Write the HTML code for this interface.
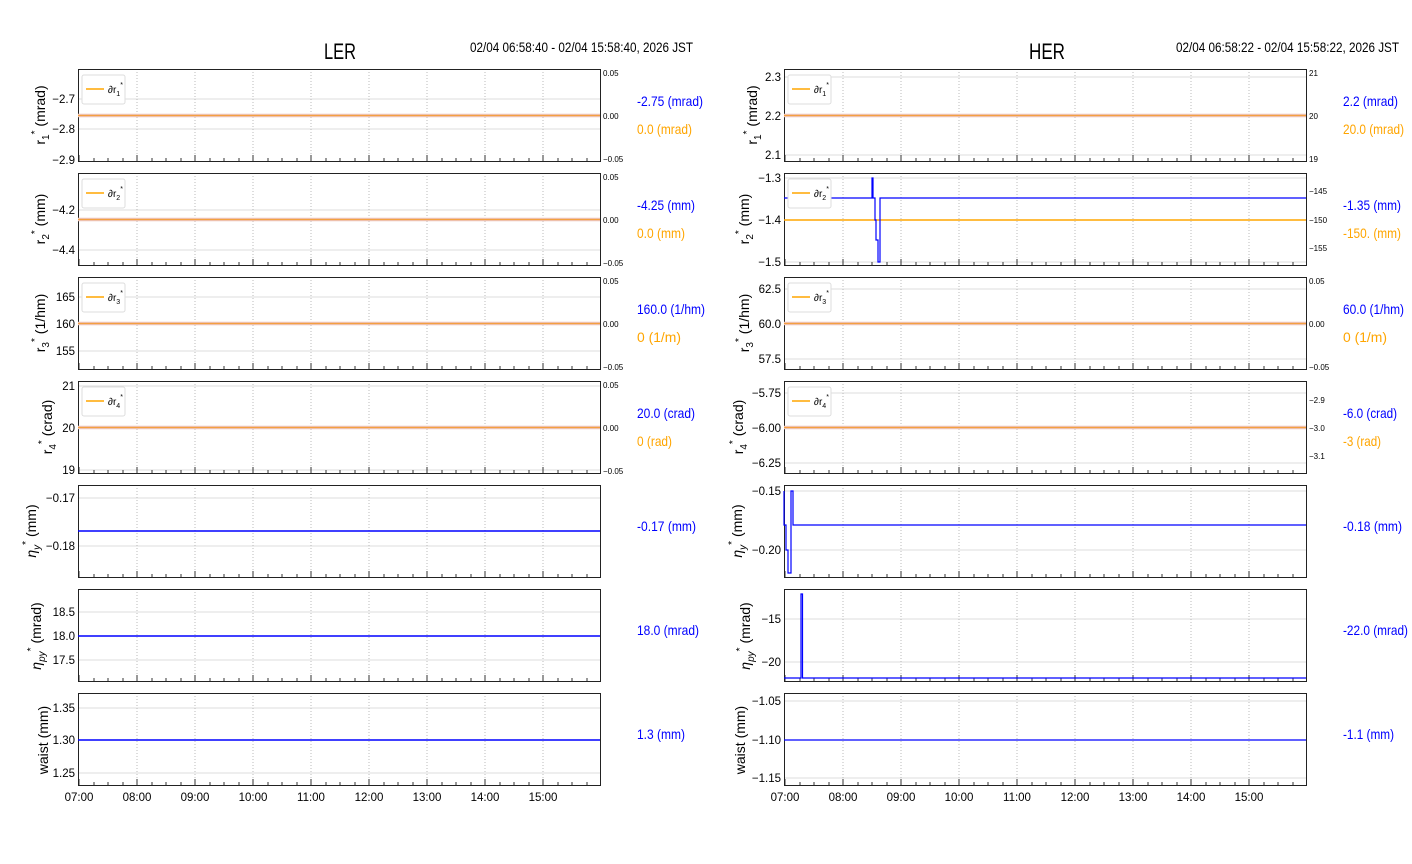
<!DOCTYPE html>
<html><head><meta charset="utf-8"><style>
html,body{margin:0;padding:0;background:#fff}
svg{display:block}
text{font-family:"Liberation Sans Narrow","Liberation Sans","DejaVu Sans Condensed",sans-serif;fill:#000}
.t{font-size:11.5px}
.s{font-size:8px}
.lg{font-size:10px}
.yl{font-family:"DejaVu Sans","Liberation Sans",sans-serif;font-size:14px}
.b{fill:#0000ff;font-size:14px}
.o{fill:#ffa500;font-size:14px}
</style></head><body>
<svg width="1412" height="864" viewBox="0 0 1412 864" xmlns="http://www.w3.org/2000/svg">
<defs>
<g id="vg" stroke="#bbb" stroke-dasharray="1,2" stroke-width="1">
<line x1="59" y1="0" x2="59" y2="92"/><line x1="117" y1="0" x2="117" y2="92"/><line x1="175" y1="0" x2="175" y2="92"/><line x1="233" y1="0" x2="233" y2="92"/><line x1="291" y1="0" x2="291" y2="92"/><line x1="349" y1="0" x2="349" y2="92"/><line x1="407" y1="0" x2="407" y2="92"/><line x1="465" y1="0" x2="465" y2="92"/>
</g>
<g id="tk" stroke="#333" stroke-width="1">
<path d="M1 92v-6M59 92v-6M117 92v-6M175 92v-6M233 92v-6M291 92v-6M349 92v-6M407 92v-6M465 92v-6M16 92v-3M30 92v-3M45 92v-3M74 92v-3M88 92v-3M103 92v-3M132 92v-3M146 92v-3M161 92v-3M190 92v-3M204 92v-3M219 92v-3M248 92v-3M262 92v-3M277 92v-3M306 92v-3M320 92v-3M335 92v-3M364 92v-3M378 92v-3M393 92v-3M422 92v-3M436 92v-3M451 92v-3M480 92v-3M494 92v-3M509 92v-3"/>
</g>
<g id="box">
<use href="#vg"/><use href="#tk"/>
<rect x="0.5" y="0.5" width="522" height="92" fill="none" stroke="#222" stroke-width="1"/>
</g>
<g id="leg">
<rect x="4" y="6" width="43" height="29" rx="2" fill="#fff" stroke="#ddd"/>
<line x1="8" y1="20" x2="26" y2="20" stroke="#ffa500" stroke-width="1.5"/>
</g>
</defs>

<text x="340" y="59" text-anchor="middle" style="font-size:22px" textLength="32" lengthAdjust="spacingAndGlyphs">LER</text>
<text x="470" y="52" style="font-size:13.5px" textLength="223" lengthAdjust="spacingAndGlyphs">02/04 06:58:40 - 02/04 15:58:40, 2026 JST</text>
<text x="1047" y="59" text-anchor="middle" style="font-size:22px" textLength="36" lengthAdjust="spacingAndGlyphs">HER</text>
<text x="1176" y="52" style="font-size:13.5px" textLength="223" lengthAdjust="spacingAndGlyphs">02/04 06:58:22 - 02/04 15:58:22, 2026 JST</text>

<!-- ===== LEFT ===== -->
<g stroke="#ddd" stroke-width="1">
<line x1="78" y1="99" x2="600" y2="99"/><line x1="78" y1="129" x2="600" y2="129"/>
<line x1="78" y1="210" x2="600" y2="210"/><line x1="78" y1="250" x2="600" y2="250"/>
<line x1="78" y1="297" x2="600" y2="297"/><line x1="78" y1="351" x2="600" y2="351"/>
<line x1="78" y1="386" x2="600" y2="386"/><line x1="78" y1="470" x2="600" y2="470"/>
<line x1="78" y1="498" x2="600" y2="498"/><line x1="78" y1="546" x2="600" y2="546"/>
<line x1="78" y1="612" x2="600" y2="612"/><line x1="78" y1="660" x2="600" y2="660"/>
<line x1="78" y1="708" x2="600" y2="708"/><line x1="78" y1="773" x2="600" y2="773"/>
</g>
<use href="#box" x="78" y="69"/><use href="#box" x="78" y="173"/><use href="#box" x="78" y="277"/><use href="#box" x="78" y="381"/><use href="#box" x="78" y="485"/><use href="#box" x="78" y="589"/><use href="#box" x="78" y="693"/>
<g stroke-width="3.5" stroke="#eec4bc">
<line x1="78" y1="115.5" x2="600" y2="115.5"/><line x1="78" y1="219.5" x2="600" y2="219.5"/><line x1="78" y1="323.5" x2="600" y2="323.5"/><line x1="78" y1="427.5" x2="600" y2="427.5"/>
</g>
<g stroke-width="1.2" stroke="#f4a040">
<line x1="78" y1="115.5" x2="600" y2="115.5"/><line x1="78" y1="219.5" x2="600" y2="219.5"/><line x1="78" y1="323.5" x2="600" y2="323.5"/><line x1="78" y1="427.5" x2="600" y2="427.5"/>
</g>
<g stroke="#0000ff" stroke-width="1.5">
<line x1="78" y1="531" x2="600" y2="531"/><line x1="78" y1="636" x2="600" y2="636"/><line x1="78" y1="740" x2="600" y2="740"/>
</g>
<use href="#leg" x="78" y="69"/><use href="#leg" x="78" y="173"/><use href="#leg" x="78" y="277"/><use href="#leg" x="78" y="381"/>
<text class="lg" x="108" y="93">∂r<tspan dy="3" font-size="7">1</tspan><tspan dy="-9" font-size="7">*</tspan></text>
<text class="lg" x="108" y="197">∂r<tspan dy="3" font-size="7">2</tspan><tspan dy="-9" font-size="7">*</tspan></text>
<text class="lg" x="108" y="301">∂r<tspan dy="3" font-size="7">3</tspan><tspan dy="-9" font-size="7">*</tspan></text>
<text class="lg" x="108" y="405">∂r<tspan dy="3" font-size="7">4</tspan><tspan dy="-9" font-size="7">*</tspan></text>
<g class="t" text-anchor="end">
<text x="75" y="103">−2.7</text><text x="75" y="133">−2.8</text><text x="75" y="164">−2.9</text>
<text x="75" y="214">−4.2</text><text x="75" y="254">−4.4</text>
<text x="75" y="301">165</text><text x="75" y="328">160</text><text x="75" y="355">155</text>
<text x="75" y="390">21</text><text x="75" y="432">20</text><text x="75" y="474">19</text>
<text x="75" y="502">−0.17</text><text x="75" y="550">−0.18</text>
<text x="75" y="616">18.5</text><text x="75" y="640">18.0</text><text x="75" y="664">17.5</text>
<text x="75" y="712">1.35</text><text x="75" y="744">1.30</text><text x="75" y="777">1.25</text>
</g>
<g class="s">
<text x="603" y="76">0.05</text><text x="603" y="119">0.00</text><text x="603" y="162">−0.05</text>
<text x="603" y="180">0.05</text><text x="603" y="223">0.00</text><text x="603" y="266">−0.05</text>
<text x="603" y="284">0.05</text><text x="603" y="327">0.00</text><text x="603" y="370">−0.05</text>
<text x="603" y="388">0.05</text><text x="603" y="431">0.00</text><text x="603" y="474">−0.05</text>
</g>
<g class="t" text-anchor="middle">
<text x="79" y="801">07:00</text><text x="137" y="801">08:00</text><text x="195" y="801">09:00</text><text x="253" y="801">10:00</text><text x="311" y="801">11:00</text><text x="369" y="801">12:00</text><text x="427" y="801">13:00</text><text x="485" y="801">14:00</text><text x="543" y="801">15:00</text>
</g>
<g class="yl" text-anchor="middle">
<text transform="translate(45,115) rotate(-90)">r<tspan dy="4" font-size="10">1</tspan><tspan dy="-11" font-size="10">*</tspan><tspan dy="7"> (mrad)</tspan></text>
<text transform="translate(45,219) rotate(-90)">r<tspan dy="4" font-size="10">2</tspan><tspan dy="-11" font-size="10">*</tspan><tspan dy="7"> (mm)</tspan></text>
<text transform="translate(45,323) rotate(-90)">r<tspan dy="4" font-size="10">3</tspan><tspan dy="-11" font-size="10">*</tspan><tspan dy="7"> (1/hm)</tspan></text>
<text transform="translate(52,427) rotate(-90)">r<tspan dy="4" font-size="10">4</tspan><tspan dy="-11" font-size="10">*</tspan><tspan dy="7"> (crad)</tspan></text>
<text transform="translate(36,531) rotate(-90)"><tspan font-style="italic">η</tspan><tspan dy="4" font-size="10" font-style="italic">y</tspan><tspan dy="-11" font-size="10">*</tspan><tspan dy="7"> (mm)</tspan></text>
<text transform="translate(41,636) rotate(-90)"><tspan font-style="italic">η</tspan><tspan dy="4" font-size="10" font-style="italic">py</tspan><tspan dy="-11" font-size="10">*</tspan><tspan dy="7"> (mrad)</tspan></text>
<text transform="translate(48,740) rotate(-90)">waist (mm)</text>
</g>
<g lengthAdjust="spacingAndGlyphs">
<text class="b" x="637" y="106" textLength="66" lengthAdjust="spacingAndGlyphs">-2.75 (mrad)</text><text class="o" x="637" y="134" textLength="55" lengthAdjust="spacingAndGlyphs">0.0 (mrad)</text>
<text class="b" x="637" y="210" textLength="58" lengthAdjust="spacingAndGlyphs">-4.25 (mm)</text><text class="o" x="637" y="238" textLength="48" lengthAdjust="spacingAndGlyphs">0.0 (mm)</text>
<text class="b" x="637" y="314" textLength="68" lengthAdjust="spacingAndGlyphs">160.0 (1/hm)</text><text class="o" x="637" y="342" textLength="44" lengthAdjust="spacingAndGlyphs">0 (1/m)</text>
<text class="b" x="637" y="418" textLength="58" lengthAdjust="spacingAndGlyphs">20.0 (crad)</text><text class="o" x="637" y="446" textLength="35" lengthAdjust="spacingAndGlyphs">0 (rad)</text>
<text class="b" x="637" y="531" textLength="59" lengthAdjust="spacingAndGlyphs">-0.17 (mm)</text>
<text class="b" x="637" y="635" textLength="62" lengthAdjust="spacingAndGlyphs">18.0 (mrad)</text>
<text class="b" x="637" y="739" textLength="48" lengthAdjust="spacingAndGlyphs">1.3 (mm)</text>
</g>

<!-- ===== RIGHT ===== -->
<g stroke="#ddd" stroke-width="1">
<line x1="784" y1="77" x2="1306" y2="77"/><line x1="784" y1="155" x2="1306" y2="155"/>
<line x1="784" y1="178" x2="1306" y2="178"/><line x1="784" y1="262" x2="1306" y2="262"/>
<line x1="784" y1="289" x2="1306" y2="289"/><line x1="784" y1="359" x2="1306" y2="359"/>
<line x1="784" y1="393" x2="1306" y2="393"/><line x1="784" y1="463" x2="1306" y2="463"/>
<line x1="784" y1="491" x2="1306" y2="491"/><line x1="784" y1="550" x2="1306" y2="550"/>
<line x1="784" y1="619" x2="1306" y2="619"/><line x1="784" y1="662" x2="1306" y2="662"/>
<line x1="784" y1="701" x2="1306" y2="701"/><line x1="784" y1="778" x2="1306" y2="778"/>
</g>
<use href="#box" x="784" y="69"/><use href="#box" x="784" y="173"/><use href="#box" x="784" y="277"/><use href="#box" x="784" y="381"/><use href="#box" x="784" y="485"/><use href="#box" x="784" y="589"/><use href="#box" x="784" y="693"/>
<g stroke-width="3.5" stroke="#eec4bc">
<line x1="784" y1="115.5" x2="1306" y2="115.5"/><line x1="784" y1="323.5" x2="1306" y2="323.5"/><line x1="784" y1="427.5" x2="1306" y2="427.5"/>
</g>
<g stroke-width="1.2" stroke="#f4a040">
<line x1="784" y1="115.5" x2="1306" y2="115.5"/><line x1="784" y1="323.5" x2="1306" y2="323.5"/><line x1="784" y1="427.5" x2="1306" y2="427.5"/>
<line x1="784" y1="220" x2="1306" y2="220" stroke="#ffa500" stroke-width="1.5"/>
</g>
<g stroke="#0000ff" stroke-width="1.2" fill="none">
<path d="M784 198H872V178H873V198H875V220H876V240H878V262H880V198H1306"/>
<path d="M784 491V525H786V550H788V573H791V491H793V525H1306"/>
<path d="M784 678H801V594H802.5V678H1306"/>
<line x1="784" y1="740" x2="1306" y2="740"/>
</g>
<use href="#leg" x="784" y="69"/><use href="#leg" x="784" y="173"/><use href="#leg" x="784" y="277"/><use href="#leg" x="784" y="381"/>
<text class="lg" x="814" y="93">∂r<tspan dy="3" font-size="7">1</tspan><tspan dy="-9" font-size="7">*</tspan></text>
<text class="lg" x="814" y="197">∂r<tspan dy="3" font-size="7">2</tspan><tspan dy="-9" font-size="7">*</tspan></text>
<text class="lg" x="814" y="301">∂r<tspan dy="3" font-size="7">3</tspan><tspan dy="-9" font-size="7">*</tspan></text>
<text class="lg" x="814" y="405">∂r<tspan dy="3" font-size="7">4</tspan><tspan dy="-9" font-size="7">*</tspan></text>
<g class="t" text-anchor="end">
<text x="781" y="81">2.3</text><text x="781" y="120">2.2</text><text x="781" y="159">2.1</text>
<text x="781" y="182">−1.3</text><text x="781" y="224">−1.4</text><text x="781" y="266">−1.5</text>
<text x="781" y="293">62.5</text><text x="781" y="328">60.0</text><text x="781" y="363">57.5</text>
<text x="781" y="397">−5.75</text><text x="781" y="432">−6.00</text><text x="781" y="467">−6.25</text>
<text x="781" y="495">−0.15</text><text x="781" y="554">−0.20</text>
<text x="781" y="623">−15</text><text x="781" y="666">−20</text>
<text x="781" y="705">−1.05</text><text x="781" y="744">−1.10</text><text x="781" y="782">−1.15</text>
</g>
<g class="s">
<text x="1309" y="76">21</text><text x="1309" y="119">20</text><text x="1309" y="162">19</text>
<text x="1309" y="194">−145</text><text x="1309" y="223">−150</text><text x="1309" y="251">−155</text>
<text x="1309" y="284">0.05</text><text x="1309" y="327">0.00</text><text x="1309" y="370">−0.05</text>
<text x="1309" y="403">−2.9</text><text x="1309" y="431">−3.0</text><text x="1309" y="459">−3.1</text>
</g>
<g class="t" text-anchor="middle">
<text x="785" y="801">07:00</text><text x="843" y="801">08:00</text><text x="901" y="801">09:00</text><text x="959" y="801">10:00</text><text x="1017" y="801">11:00</text><text x="1075" y="801">12:00</text><text x="1133" y="801">13:00</text><text x="1191" y="801">14:00</text><text x="1249" y="801">15:00</text>
</g>
<g class="yl" text-anchor="middle">
<text transform="translate(757,115) rotate(-90)">r<tspan dy="4" font-size="10">1</tspan><tspan dy="-11" font-size="10">*</tspan><tspan dy="7"> (mrad)</tspan></text>
<text transform="translate(749,219) rotate(-90)">r<tspan dy="4" font-size="10">2</tspan><tspan dy="-11" font-size="10">*</tspan><tspan dy="7"> (mm)</tspan></text>
<text transform="translate(749,323) rotate(-90)">r<tspan dy="4" font-size="10">3</tspan><tspan dy="-11" font-size="10">*</tspan><tspan dy="7"> (1/hm)</tspan></text>
<text transform="translate(743,427) rotate(-90)">r<tspan dy="4" font-size="10">4</tspan><tspan dy="-11" font-size="10">*</tspan><tspan dy="7"> (crad)</tspan></text>
<text transform="translate(742,531) rotate(-90)"><tspan font-style="italic">η</tspan><tspan dy="4" font-size="10" font-style="italic">y</tspan><tspan dy="-11" font-size="10">*</tspan><tspan dy="7"> (mm)</tspan></text>
<text transform="translate(750,636) rotate(-90)"><tspan font-style="italic">η</tspan><tspan dy="4" font-size="10" font-style="italic">py</tspan><tspan dy="-11" font-size="10">*</tspan><tspan dy="7"> (mrad)</tspan></text>
<text transform="translate(745,740) rotate(-90)">waist (mm)</text>
</g>
<text class="b" x="1343" y="106" textLength="55" lengthAdjust="spacingAndGlyphs">2.2 (mrad)</text><text class="o" x="1343" y="134" textLength="61" lengthAdjust="spacingAndGlyphs">20.0 (mrad)</text>
<text class="b" x="1343" y="210" textLength="58" lengthAdjust="spacingAndGlyphs">-1.35 (mm)</text><text class="o" x="1343" y="238" textLength="58" lengthAdjust="spacingAndGlyphs">-150. (mm)</text>
<text class="b" x="1343" y="314" textLength="61" lengthAdjust="spacingAndGlyphs">60.0 (1/hm)</text><text class="o" x="1343" y="342" textLength="44" lengthAdjust="spacingAndGlyphs">0 (1/m)</text>
<text class="b" x="1343" y="418" textLength="54" lengthAdjust="spacingAndGlyphs">-6.0 (crad)</text><text class="o" x="1343" y="446" textLength="38" lengthAdjust="spacingAndGlyphs">-3 (rad)</text>
<text class="b" x="1343" y="531" textLength="59" lengthAdjust="spacingAndGlyphs">-0.18 (mm)</text>
<text class="b" x="1343" y="635" textLength="65" lengthAdjust="spacingAndGlyphs">-22.0 (mrad)</text>
<text class="b" x="1343" y="739" textLength="51" lengthAdjust="spacingAndGlyphs">-1.1 (mm)</text>
</svg>
</body></html>
